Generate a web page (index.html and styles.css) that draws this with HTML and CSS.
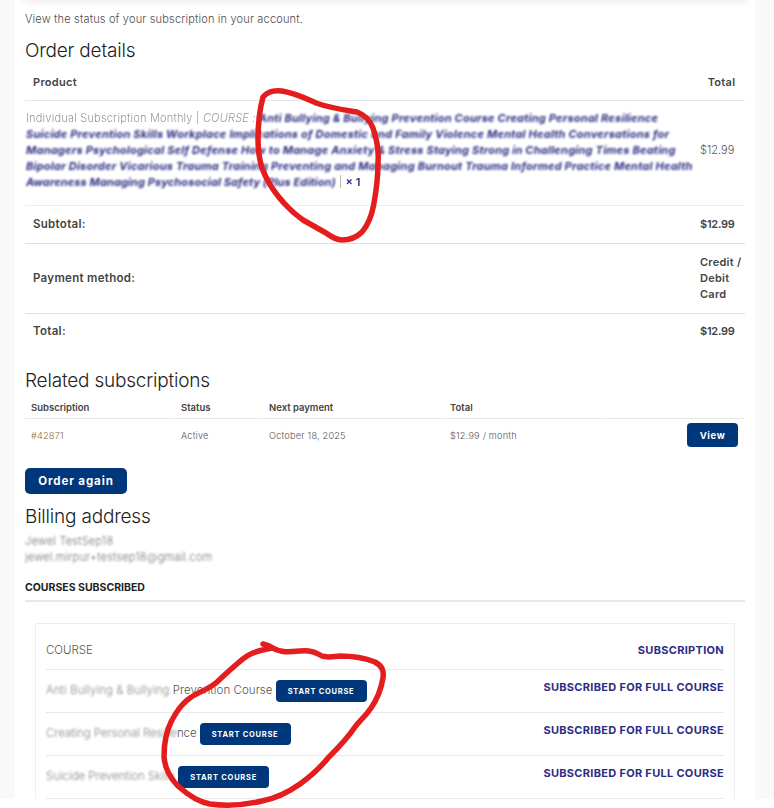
FILE: index.html
```html
<!DOCTYPE html>
<html lang="en">
<head>
<meta charset="utf-8">
<title>Subscription</title>
<link rel="stylesheet" href="styles.css">
</head>
<body>
<div class="page">
  <main class="main">
    <div class="topbar"></div>
    <p class="intro">View the status of your subscription in your account.</p>
    <h2 class="h-order">Order details</h2>
    <table class="order">
      <thead>
        <tr><th class="th-product">Product</th><th class="th-total">Total</th></tr>
      </thead>
      <tbody>
        <tr class="row-item">
          <td class="item"><span class="soft">Individual Subscription Monthly | <i>COURSE :</i></span> <a class="blurlink">Anti Bullying &amp; Bullying Prevention Course Creating Personal Resilience<br>Suicide Prevention Skills Workplace Implications of Domestic and Family Violence Mental Health Conversations for<br>Managers Psychological Self Defense How to Manage Anxiety &amp; Stress Staying Strong in Challenging Times Beating<br>Bipolar Disorder Vicarious Trauma Training Preventing and Managing Burnout Trauma Informed Practice Mental Health<br><span class="tight">Awareness Managing Psychosocial Safety (Plus Edition)</span></a> <span class="soft">|</span> <b class="blurcount">× 1</b></td>
          <td class="price">$12.99</td>
        </tr>
      </tbody>
      <tfoot>
        <tr class="row-sub"><th>Subtotal:</th><td class="money">$12.99</td></tr>
        <tr class="row-pay"><th>Payment method:</th><td>Credit / Debit Card</td></tr>
        <tr class="row-total"><th>Total:</th><td class="money">$12.99</td></tr>
      </tfoot>
    </table>
    <h2 class="h-related">Related subscriptions</h2>
    <table class="related">
      <colgroup><col class="c1"><col class="c2"><col class="c3"><col class="c4"><col class="c5"></colgroup>
      <thead><tr><th>Subscription</th><th>Status</th><th>Next payment</th><th>Total</th><th></th></tr></thead>
      <tbody><tr><td class="sub-id">#42871</td><td>Active</td><td>October 18, 2025</td><td>$12.99 / month</td><td class="act"><a class="btn btn-view">View</a></td></tr></tbody>
    </table>
    <a class="btn btn-again">Order again</a>
    <h2 class="h-billing">Billing address</h2>
    <address class="addr">Jewel TestSep18<br>jewel.mirpur+testsep18@gmail.com</address>
    <h3 class="h-courses">COURSES SUBSCRIBED</h3>
    <section class="card">
      <div class="c-row c-head"><span class="c-name">COURSE</span><strong class="c-sub">SUBSCRIPTION</strong></div>
      <div class="c-row"><span class="c-name n1"><span class="blr">Anti Bullying &amp; Bullying</span> Prevention Course</span><a class="btn btn-start">START COURSE</a><strong class="c-sub">SUBSCRIBED FOR FULL COURSE</strong></div>
      <div class="c-row"><span class="c-name n2"><span class="blr">Creating Personal Resilie</span>nce</span><a class="btn btn-start">START COURSE</a><strong class="c-sub">SUBSCRIBED FOR FULL COURSE</strong></div>
      <div class="c-row"><span class="c-name n3"><span class="blr">Suicide Prevention Skills</span></span><a class="btn btn-start">START COURSE</a><strong class="c-sub">SUBSCRIBED FOR FULL COURSE</strong></div>
    </section>
  </main>
</div>
<svg class="ink" width="774" height="808" viewBox="0 0 774 808" aria-hidden="true">
  <defs>
    <clipPath id="upper"><rect x="0" y="0" width="774" height="205"/></clipPath>
    <clipPath id="lower"><rect x="0" y="205" width="774" height="100"/></clipPath>
    <clipPath id="leftpart"><rect x="0" y="670" width="176" height="138"/></clipPath>
    <clipPath id="rightpart"><rect x="176" y="630" width="400" height="178"/></clipPath>
    <filter id="soft" x="-5%" y="-5%" width="110%" height="110%"><feGaussianBlur stdDeviation="0.7"/></filter>
    <path id="loop1" d="M263 97C268 91 275 90 282 91C295 93 305 98 316 103C330 108 345 110 357 112C365 115 370 120 373 128C377 140 379 150 378 162C378 178 376 192 374 203C372 215 369 224 362 232C356 238 349 240 342 240C336 240 332 237 326 233L303 220C293 213 285 205 278 196C270 186 265 176 262 168C259 158 258 148 258 140C258 125 260 108 263 97Z"/>
    <path id="loop2" d="M263 644C267 645 270 646 273 648C281 653 290 652 300 651C308 650 313 651 318 654C324 658 330 657 340 656C352 656 365 658 375 662C382 666 384 670 383 678C381 690 378 698 371 708C365 717 360 720 355 727C347 739 338 748 328 758C320 768 311 776 300 784C290 791 278 798 262 801C245 805 225 806 210 804C198 802 188 795 178 786C170 778 165 768 164 757C164 745 166 732 171 722C176 712 181 704 190 698C198 692 208 690 217 682C228 672 238 662 247 656C254 651 263 650 272 648"/>
  </defs>
  <use href="#loop1" class="ink-line" clip-path="url(#lower)"/>
  <g clip-path="url(#upper)"><use href="#loop1" class="ink-line" filter="url(#soft)"/></g>
  <use href="#loop2" class="ink-line" clip-path="url(#rightpart)"/>
  <g clip-path="url(#leftpart)"><use href="#loop2" class="ink-line" filter="url(#soft)"/></g>
</svg>
</body>
</html>
```
FILE: styles.css
```css
* { box-sizing: border-box; }
html, body { margin: 0; padding: 0; background: #fff; }
body {
  position: relative;
  height: 808px;
  overflow: hidden;
  font-family: Inter, "Liberation Sans", sans-serif;
  font-size: 11px;
  color: #555;
}
.page {
  height: 799px;
  overflow: hidden;
  background: #f9f9f9;
  padding: 0 19px 0 15px;
}
.main {
  background: #fff;
  height: 799px;
  padding: 0 10px;
  overflow: hidden;
}
.topbar {
  height: 0;
  box-shadow: 0 0 6px 2px rgba(0, 0, 0, 0.1);
}
.intro {
  margin: 0;
  padding-top: 12px;
  line-height: 14px;
  font-weight: 300;
  letter-spacing: 0.18px;
  color: #4d4d4d;
}
h2 {
  margin: 0;
  font-size: 19px;
  font-weight: 300;
  color: #222;
  letter-spacing: -0.2px;
  line-height: 26px;
}
.h-order { margin-top: 12px; }
table { border-collapse: separate; border-spacing: 0; table-layout: fixed; width: 720px; }
.order { margin-top: 0; width: 720px; }
.order th, .order td { padding: 0; vertical-align: middle; }
.order th { font-weight: 600; color: #444; text-align: left; letter-spacing: 0.3px; }
.order thead th { height: 37px; border-bottom: 1px solid #e6e6e6; padding-bottom: 1px; }
.th-product { padding-left: 8px !important; width: 673px; }
.th-total { text-align: center !important; }
.row-item td { height: 105px; border-bottom: 1px solid #eeeeee; padding-bottom: 6px; }
.item { line-height: 16px; white-space: nowrap; padding-left: 1px !important; }
.soft { color: #999; font-weight: 300; letter-spacing: 0.2px; filter: blur(0.7px); }
.soft i { font-style: italic; }
.blurlink {
  color: #2b2d83;
  font-weight: 700;
  font-style: italic;
  letter-spacing: 0.22px;
  filter: blur(1px);
  display: inline;
}
.tight { letter-spacing: 0.1px; }
.blurcount { color: #2b2d83; font-weight: 600; filter: blur(0.6px); }
.price { padding-left: 2px !important; color: #555; font-weight: 300; }
.order tfoot th, .order tfoot td { border-bottom: 1px solid #e0e0e0; padding-bottom: 2px; }
.order tfoot th { padding-left: 8px; font-size: 11.5px; }
.order tfoot td { padding-left: 2px; font-weight: 600; color: #444; line-height: 16px; letter-spacing: 0.25px; }
.order tfoot .money { letter-spacing: -0.25px; }
.row-sub th, .row-sub td { height: 38px; }
.row-pay th, .row-pay td { height: 70px; }
.row-total th, .row-total td { height: 36px; border-bottom: 0 !important; }
.h-related { margin-top: 18px; }
.related { margin-top: 2px; }
.related th { font-size: 9.5px; font-weight: 600; color: #444; text-align: left; padding: 0 0 0 6px; height: 23px; border-bottom: 1px solid #e6e6e6; border-right: 1px solid #fff; }
.related td { font-size: 9.2px; letter-spacing: 0.2px; font-weight: 300; color: #555; padding: 0 0 0 6px; height: 32px; }
.c1 { width: 150px; } .c2 { width: 88px; } .c3 { width: 181px; } .c4 { width: 163px; }
.sub-id { color: #8a6a3c !important; }
.act { text-align: right; padding-right: 7px !important; }
.btn {
  display: inline-flex;
  align-items: center;
  justify-content: center;
  background: #00377a;
  color: #fff;
  font-weight: 700;
  border-radius: 4px;
}
.btn-view { width: 51px; height: 24px; font-size: 9.5px; letter-spacing: 0.6px; vertical-align: middle; }
.btn-again { width: 102px; height: 26px; font-size: 11.5px; letter-spacing: 0.9px; margin-top: 17px; border-radius: 5px; display: flex; }
.h-billing { margin-top: 10px; }
.addr { margin-top: 3px; font-style: normal; font-weight: 300; line-height: 16px; letter-spacing: 0.2px; color: #777; filter: blur(1px); }
.h-courses { margin: 16px 0 0; padding-bottom: 5px; font-size: 10.5px; font-weight: 700; color: #222; line-height: 14px; border-bottom: 2px solid #e8e8e8; }
.card { margin: 21px 10px 0; border: 1px solid #eeeeee; padding: 0 10px; height: 200px; }
.c-row { display: flex; align-items: center; height: 43px; border-bottom: 1px solid #e8e8e8; font-weight: 300; font-size: 11.5px; color: #555; }
.c-head { height: 46px; padding-top: 7px; }
.c-name { white-space: nowrap; margin-top: -2px; }
.c-head .c-name { margin-top: 0; }
.n1 { letter-spacing: 0.05px; }
.n2 { letter-spacing: -0.07px; }
.n3 { letter-spacing: -0.04px; }
.blr { filter: blur(0.9px); color: #888; display: inline-block; }
.btn-start { width: 91px; height: 22px; font-size: 7.5px; letter-spacing: 0.75px; border-radius: 4px; margin-left: 3px; }
.c-sub { margin-left: auto; margin-top: -8px; color: #2b2d83; font-weight: 700; font-size: 11px; letter-spacing: 0.3px; }
.c-head .c-sub { margin-top: 0; }
.ink { position: absolute; left: 0; top: 0; pointer-events: none; }
.ink-line { fill: none; stroke: #e41e1e; stroke-width: 5.5; stroke-linecap: round; stroke-linejoin: round; }
```
